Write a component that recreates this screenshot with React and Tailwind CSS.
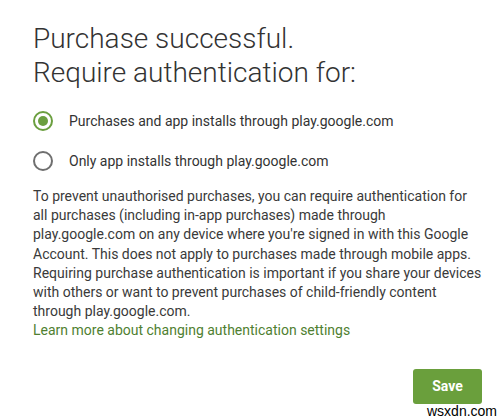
import React from "react";

const OPTIONS = [
  { id: "all", label: "Purchases and app installs through play.google.com" },
  { id: "apps", label: "Only app installs through play.google.com" },
];

const PARAGRAPH = [
  "To prevent unauthorised purchases, you can require authentication for",
  "all purchases (including in-app purchases) made through",
  "play.google.com on any device where you're signed in with this Google",
  "Account. This does not apply to purchases made through mobile apps.",
  "Requiring purchase authentication is important if you share your devices",
  "with others or want to prevent purchases of child-friendly content",
  "through play.google.com.",
];

function Radio({ checked }) {
  return (
    <span
      className={`flex h-[20px] w-[20px] items-center justify-center rounded-full border-2 ${
        checked ? "border-[#6b9f3f]" : "border-[#6f6f6f]"
      }`}
    >
      {checked && <span className="h-[10px] w-[10px] rounded-full bg-[#6b9f3f]" />}
    </span>
  );
}

export default function App() {
  const selected = "all";

  return (
    <div
      className="relative h-[420px] w-[501px] overflow-hidden bg-white text-[#333]"
      style={{ fontFamily: "Roboto, 'Liberation Sans', sans-serif" }}
    >
      <div className="pl-[33px] pt-[22px]">
        <h1 className="text-[28px] font-light leading-[34px] text-[#333]">
          Purchase successful.
          <br />
          Require authentication for:
        </h1>

        <div className="mt-[21px] flex flex-col gap-[20px]">
          {OPTIONS.map((o) => (
            <label key={o.id} className="flex h-[20px] items-center">
              <Radio checked={selected === o.id} />
              <span className="ml-[16px] text-[14px] leading-[20px] text-[#333]">{o.label}</span>
            </label>
          ))}
        </div>

        <div className="mt-[16px] text-[14px] leading-[19.2px]">
          {PARAGRAPH.map((line, i) => (
            <div key={i} className="whitespace-nowrap text-[#3a3a3a]">
              {line}
            </div>
          ))}
          <div className="whitespace-nowrap text-[#4f7f31]">
            Learn more about changing authentication settings
          </div>
        </div>
      </div>

      <div className="flex justify-end pr-[19px] pt-[28px]">
        <button className="h-[35px] w-[69px] rounded-[3px] bg-[#6a9f3c] text-[14px] font-bold text-white">
          Save
        </button>
      </div>

      <span
        className="absolute left-[427px] top-[403px] text-[14px] leading-[16px] text-black"
        style={{ fontFamily: "'Liberation Sans', Arial, sans-serif" }}
      >
        wsxdn.com
      </span>
    </div>
  );
}
